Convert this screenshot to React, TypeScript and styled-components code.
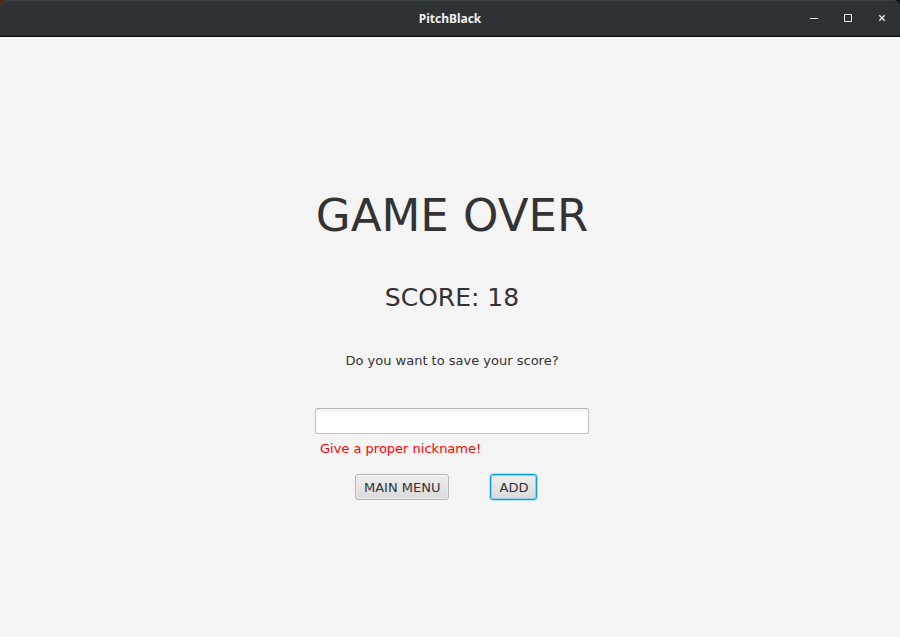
import React, { useState } from "react";
import styled, { createGlobalStyle, css } from "styled-components";

const GlobalStyle = createGlobalStyle`
  *, *::before, *::after { box-sizing: border-box; }
  body {
    margin: 0;
    background: #f4f4f4;
    color: #333333;
    font: 13px/16px "DejaVu Sans", sans-serif;
  }
`;

const Window = styled.div`
  display: flex;
  flex-direction: column;
  min-height: 100vh;
  background: linear-gradient(to right, #5a2a06, #0b0c0c 20px);
`;

const TitleBar = styled.header`
  display: grid;
  grid-template-columns: 1fr auto 1fr;
  align-items: center;
  height: 37px;
  padding: 0 8px;
  background: #2d3235;
  border-bottom: 1px solid #0b0c0c;
  border-radius: 7px 7px 0 0;
  box-shadow: inset 0 1px #3c4143, inset 0 -1px #23282a;
`;

const Title = styled.h1`
  grid-column: 2;
  margin: 0;
  padding-top: 2px;
  color: #eeeeec;
  font: bold 12px/16px "Noto Sans", sans-serif;
`;

const WindowControls = styled.div`
  display: flex;
  justify-content: flex-end;
  gap: 14px;
`;

const ControlButton = styled.button`
  display: flex;
  align-items: center;
  justify-content: center;
  width: 20px;
  height: 20px;
  padding: 0;
  border: 0;
  background: none;
  color: #eeeeec;
`;

const Content = styled.main`
  flex: 1;
  display: flex;
  flex-direction: column;
  align-items: center;
  justify-content: center;
  padding: 15px 0 0 4px;
  background: #f4f4f4;
`;

const ScoreForm = styled.form`
  display: flex;
  flex-direction: column;
  min-width: 274px;
`;

const Headings = styled.div`
  display: flex;
  flex-direction: column;
  align-items: center;
  gap: 40px;
  margin-bottom: 39px;
`;

const GameOver = styled.h2`
  margin: 0;
  font-size: 45px;
  font-weight: normal;
  line-height: 54px;
`;

const Score = styled.p`
  margin: 0;
  font-size: 25px;
  line-height: 30px;
`;

const Question = styled.label``;

const NicknameInput = styled.input`
  width: 100%;
  height: 26px;
  padding: 4px 7px;
  border: 1px solid #c4c4c4;
  border-top-color: #b7b7b7;
  border-radius: 3px;
  background: linear-gradient(#f2f2f2, #ffffff 5px);
  color: inherit;
  font: inherit;
  outline: none;
`;

const ErrorText = styled.p`
  margin: 7px 0 0;
  padding-left: 5px;
  color: #ff0000;
`;

const Actions = styled.div`
  display: flex;
  gap: 41px;
  margin-top: 17px;
  padding-left: 40px;
`;

const ActionButton = styled.button<{ $focused?: boolean }>`
  height: 26px;
  padding: 2px 8px 0;
  border: 1px solid #b5b5b5;
  border-radius: 3px;
  background: linear-gradient(#efefef, #dadada);
  box-shadow: inset 0 1px #f8f8f8, inset 0 0 0 1px #ebebeb;
  color: inherit;
  font: inherit;
  white-space: nowrap;
  ${({ $focused }) =>
    $focused &&
    css`
      border-color: #039ed3;
      box-shadow: 0 0 0 1px #b9e2f0, inset 0 0 0 1px #8fd0e6;
    `}
`;

export default function App() {
  const [nickname, setNickname] = useState("");

  return (
    <>
      <GlobalStyle />
      <Window>
        <TitleBar>
          <Title>PitchBlack</Title>
          <WindowControls>
            <ControlButton type="button" aria-label="Minimize">
              <svg width="10" height="10" viewBox="0 0 10 10" aria-hidden="true">
                <path d="M1 5.5h8" stroke="currentColor" />
              </svg>
            </ControlButton>
            <ControlButton type="button" aria-label="Maximize">
              <svg width="10" height="10" viewBox="0 0 10 10" aria-hidden="true">
                <path d="M1.5 1.5h7v7h-7z" fill="none" stroke="currentColor" />
              </svg>
            </ControlButton>
            <ControlButton type="button" aria-label="Close">
              <svg width="10" height="10" viewBox="0 0 10 10" aria-hidden="true">
                <path d="M2.3 2.3l5.4 5.4M7.7 2.3l-5.4 5.4" fill="none" stroke="currentColor" strokeWidth="1.3" />
              </svg>
            </ControlButton>
          </WindowControls>
        </TitleBar>
        <Content>
          <ScoreForm onSubmit={(event) => event.preventDefault()}>
            <Headings>
              <GameOver>GAME OVER</GameOver>
              <Score>SCORE: 18</Score>
              <Question htmlFor="nickname">Do you want to save your score?</Question>
            </Headings>
            <NicknameInput
              id="nickname"
              type="text"
              value={nickname}
              onChange={(event) => setNickname(event.target.value)}
              aria-invalid="true"
              aria-describedby="nickname-error"
            />
            <ErrorText id="nickname-error">Give a proper nickname!</ErrorText>
            <Actions>
              <ActionButton type="button">MAIN MENU</ActionButton>
              <ActionButton type="submit" $focused>ADD</ActionButton>
            </Actions>
          </ScoreForm>
        </Content>
      </Window>
    </>
  );
}
